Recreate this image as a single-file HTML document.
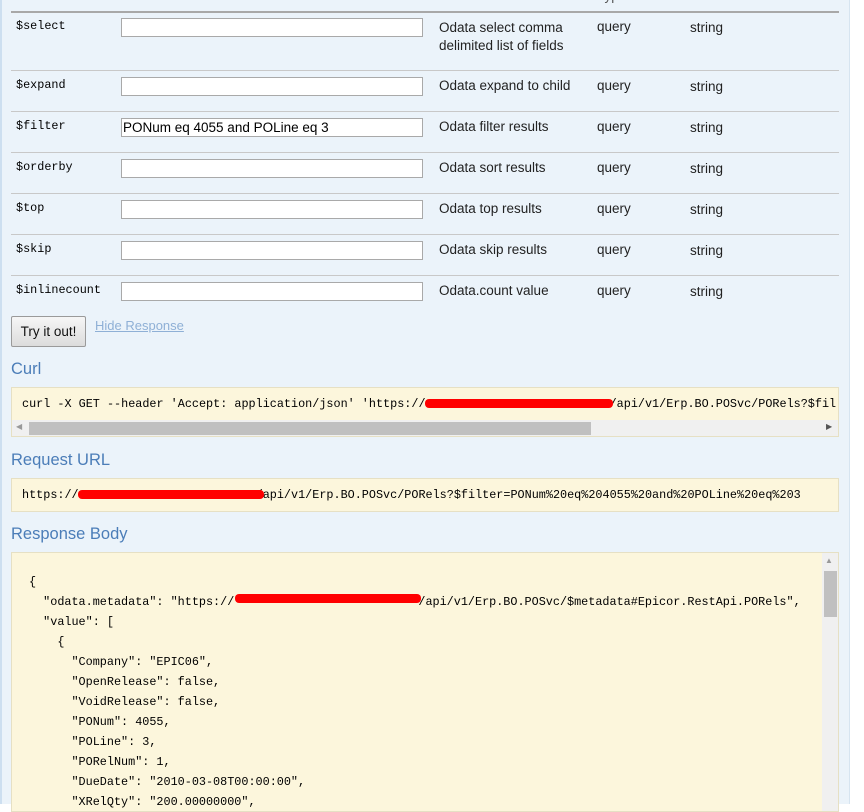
<!DOCTYPE html>
<html><head><meta charset="utf-8"><style>
*{margin:0;padding:0;box-sizing:border-box}
body{width:864px;height:804px;overflow:hidden;background:#fff;font-family:"Liberation Sans",Arial,sans-serif;position:relative}
#pg{position:absolute;left:0;top:0;width:850px;height:804px;background:#ebf3fa;border-right:1px solid #d6e4f0}
.a{position:absolute;white-space:pre}
.m{font-family:"Liberation Mono",monospace;font-size:11.8px;color:#000}
.s{font-size:13.5px;color:#222}
.ln{position:absolute;left:11px;width:828px;height:1px;background:#c8c8c8}
.in{position:absolute;left:121px;width:302px;height:19px;background:#fff;border:1px solid #a9a9a9;font-size:13.5px;padding-left:1px;line-height:17px}
.h{position:absolute;left:11px;font-size:16.5px;color:#4b7db8}
.box{position:absolute;left:11px;width:828px;background:#fcf6dc;border:1px solid #e6e0c4}
.red{position:absolute;height:9px;background:#ff0000;border-radius:4px}
</style></head><body><div id="pg">
<div style="position:absolute;left:0;top:0;width:2px;height:804px;background:#cddff0"></div>
<div class="a s" style="left:597px;top:-12px;color:#555">Type</div>
<div style="position:absolute;left:11px;top:11px;width:828px;height:2px;background:#a8a8a8"></div>

<div class="a m" style="left:16px;top:19px">$select</div><div class="in" style="top:18px"></div>
<div class="a s" style="left:439px;top:19px;line-height:18px">Odata select comma
delimited list of fields</div>
<div class="a s" style="left:597px;top:19px">query</div><div class="a s" style="left:690px;top:20px">string</div>
<div class="ln" style="top:70px"></div>

<div class="a m" style="left:16px;top:78px">$expand</div><div class="in" style="top:77px"></div>
<div class="a s" style="left:439px;top:78px">Odata expand to child</div>
<div class="a s" style="left:597px;top:78px">query</div><div class="a s" style="left:690px;top:79px">string</div>
<div class="ln" style="top:111px"></div>

<div class="a m" style="left:16px;top:119px">$filter</div><div class="in" style="top:118px">PONum eq 4055 and POLine eq 3</div>
<div class="a s" style="left:439px;top:119px">Odata filter results</div>
<div class="a s" style="left:597px;top:119px">query</div><div class="a s" style="left:690px;top:120px">string</div>
<div class="ln" style="top:152px"></div>

<div class="a m" style="left:16px;top:160px">$orderby</div><div class="in" style="top:159px"></div>
<div class="a s" style="left:439px;top:160px">Odata sort results</div>
<div class="a s" style="left:597px;top:160px">query</div><div class="a s" style="left:690px;top:161px">string</div>
<div class="ln" style="top:193px"></div>

<div class="a m" style="left:16px;top:201px">$top</div><div class="in" style="top:200px"></div>
<div class="a s" style="left:439px;top:201px">Odata top results</div>
<div class="a s" style="left:597px;top:201px">query</div><div class="a s" style="left:690px;top:202px">string</div>
<div class="ln" style="top:234px"></div>

<div class="a m" style="left:16px;top:242px">$skip</div><div class="in" style="top:241px"></div>
<div class="a s" style="left:439px;top:242px">Odata skip results</div>
<div class="a s" style="left:597px;top:242px">query</div><div class="a s" style="left:690px;top:243px">string</div>
<div class="ln" style="top:275px"></div>

<div class="a m" style="left:16px;top:283px">$inlinecount</div><div class="in" style="top:282px"></div>
<div class="a s" style="left:439px;top:283px">Odata.count value</div>
<div class="a s" style="left:597px;top:283px">query</div><div class="a s" style="left:690px;top:284px">string</div>

<div style="position:absolute;left:11px;top:316px;width:75px;height:31px;border:1px solid #9a9a9a;border-radius:2px;background:linear-gradient(#f6f6f6,#dcdcdc);font-size:13.5px;text-align:center;line-height:29px;color:#111">Try it out!</div>
<div class="a" style="left:95px;top:318px;font-size:13px;color:#8fb0d6;text-decoration:underline">Hide Response</div>

<div class="h" style="top:360px">Curl</div>
<div class="box" style="top:387px;height:50px;overflow:hidden">
<div class="a m" style="left:10px;top:9px">curl -X GET --header 'Accept: application/json' 'https://                          /api/v1/Erp.BO.POSvc/PORels?$fil</div>
<div style="position:absolute;left:0;top:32px;width:826px;height:17px;background:#f0f0f0"></div>
<div style="position:absolute;left:17px;top:34px;width:562px;height:13px;background:#c0c0c0"></div>
<div class="a" style="left:4px;top:34px;font-size:8px;color:#999">◀</div>
<div class="a" style="left:814px;top:34px;font-size:8px;color:#555">▶</div>
</div>
<div class="red" style="left:425px;top:399px;width:188px"></div>

<div class="h" style="top:451px">Request URL</div>
<div class="box" style="top:478px;height:34px">
<div class="a m" style="left:10px;top:9px">https://                         /api/v1/Erp.BO.POSvc/PORels?$filter=PONum%20eq%204055%20and%20POLine%20eq%203</div>
</div>
<div class="red" style="left:78px;top:490px;width:186px"></div>

<div class="h" style="top:525px">Response Body</div>
<div class="box" style="top:552px;height:260px;overflow:hidden">
<div class="a m" style="left:17px;top:19px;line-height:20px">{
  "odata.metadata": "https://                          /api/v1/Erp.BO.POSvc/$metadata#Epicor.RestApi.PORels",
  "value": [
    {
      "Company": "EPIC06",
      "OpenRelease": false,
      "VoidRelease": false,
      "PONum": 4055,
      "POLine": 3,
      "PORelNum": 1,
      "DueDate": "2010-03-08T00:00:00",
      "XRelQty": "200.00000000",</div>
<div style="position:absolute;left:810px;top:0;width:17px;height:260px;background:#f0f0f0"></div>
<div style="position:absolute;left:812px;top:18px;width:13px;height:46px;background:#c0c0c0"></div>
<div class="a" style="left:813px;top:3px;font-size:8px;color:#999">▲</div>
</div>
<div class="red" style="left:235px;top:594px;width:186px"></div>
</div></body></html>
